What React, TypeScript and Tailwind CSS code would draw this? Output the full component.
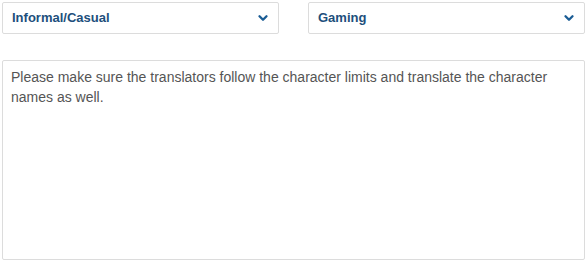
import { ChevronDown } from "lucide-react"

function Select({ label }: { label: string }) {
  return (
    <div className="flex h-[32px] w-[277px] items-center justify-between rounded-[2px] border border-[#dcdcdc] bg-white pl-[9px] pr-[8px]">
      <span className="text-[13px] font-bold text-[#1d4f7c]">{label}</span>
      <ChevronDown className="h-[14px] w-[14px] text-[#1b5d95]" strokeWidth={4} />
    </div>
  )
}

export default function App() {
  return (
    <div className="h-[263px] w-[588px] bg-white p-[2px] font-['Liberation_Sans',Arial,sans-serif]">
      <div className="flex justify-between pr-[1px]">
        <Select label="Informal/Casual" />
        <Select label="Gaming" />
      </div>
      <div className="mt-[26px] h-[200px] w-[583px] rounded-[2px] border border-[#dcdcdc] px-[8px] pt-[6px] text-[14px] leading-[20px] text-[#555]">
        Please make sure the translators follow the character limits and translate the character names as well.
      </div>
    </div>
  )
}
